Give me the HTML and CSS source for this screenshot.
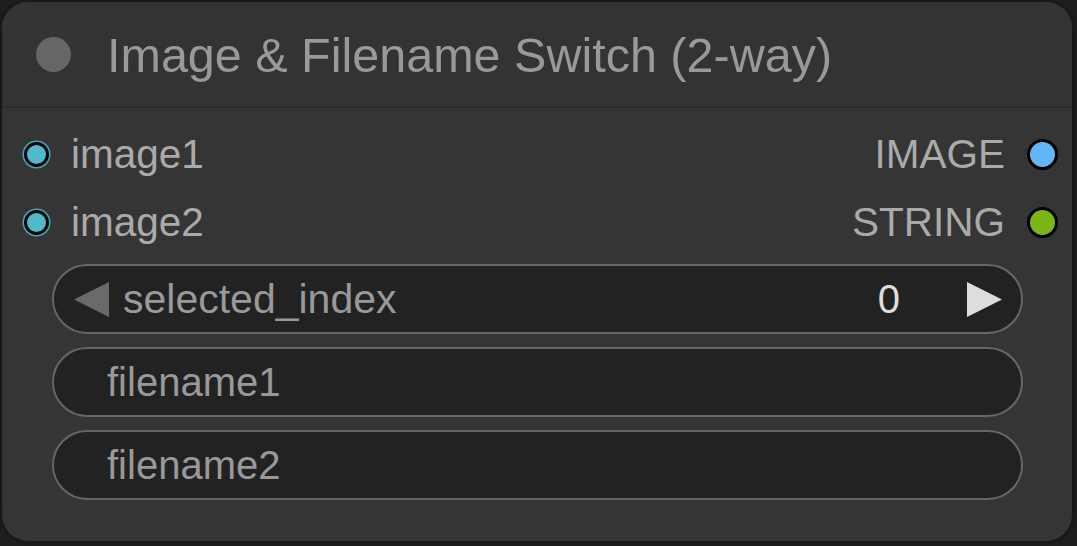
FILE: index.html
```html
<!DOCTYPE html>
<html>
<head>
<meta charset="utf-8">
<link rel="stylesheet" href="styles.css">
</head>
<body>
<div class="node">
  <div class="title">
    <span class="title-dot"></span>
    <span class="title-text">Image &amp; Filename Switch (2-way)</span>
  </div>
  <div class="body">
    <div class="slot-row">
      <div class="input"><span class="in-dot"></span><span class="slot-label">image1</span></div>
      <div class="output"><span class="slot-label">IMAGE</span><span class="out-dot blue"></span></div>
    </div>
    <div class="slot-row">
      <div class="input"><span class="in-dot"></span><span class="slot-label">image2</span></div>
      <div class="output"><span class="slot-label">STRING</span><span class="out-dot green"></span></div>
    </div>
    <div class="widgets">
      <div class="widget number">
        <svg class="arrow left" width="35" height="35" viewBox="0 0 35 35"><polygon points="35,0 35,35 0,17.5" fill="#6a6a6a"/></svg>
        <span class="w-label wide">selected_index</span>
        <span class="w-value">0</span>
        <svg class="arrow right" width="35" height="35" viewBox="0 0 35 35"><polygon points="0,0 0,35 35,17.5" fill="#dddddd"/></svg>
      </div>
      <div class="widget text"><span class="w-label">filename1</span></div>
      <div class="widget text"><span class="w-label">filename2</span></div>
    </div>
  </div>
</div>
</body>
</html>
```

FILE: styles.css
```css
html, body {
  margin: 0;
  padding: 0;
  background: #1f1f1f;
  width: 1077px;
  height: 546px;
  overflow: hidden;
  font-family: "Liberation Sans", Arial, sans-serif;
}

.node {
  margin: 2px 0 0 2px;
  width: 1070px;
  height: 539px;
  background: #353535;
  border-radius: 26px;
  box-shadow: 0 0 6px rgba(0, 0, 0, 0.6);
  overflow: hidden;
  display: flex;
  flex-direction: column;
}

.title {
  height: 104px;
  flex: none;
  background: #333333;
  border-bottom: 2px solid #2a2a2a;
  display: flex;
  align-items: center;
  padding-left: 34px;
  box-sizing: content-box;
}

.title-dot {
  width: 35px;
  height: 35px;
  border-radius: 50%;
  background: #666666;
  flex: none;
}

.title-text {
  margin-left: 36px;
  font-size: 48.5px;
  color: #999999;
  line-height: 1;
  position: relative;
  top: 1px;
}

.body {
  padding-top: 12px;
  display: flex;
  flex-direction: column;
}

.slot-row {
  height: 68px;
  display: flex;
  align-items: center;
  justify-content: space-between;
  padding: 0 14px 0 22px;
}

.input, .output {
  display: flex;
  align-items: center;
}

.slot-label {
  font-size: 40.5px;
  color: #aaaaaa;
  line-height: 1;
}

.in-dot {
  width: 19px;
  height: 19px;
  border-radius: 50%;
  background: #52b8cc;
  border: 3px solid #000;
  box-shadow: 0 0 0 1.5px #3fa9b8;
  margin-right: 22px;
}

.out-dot {
  width: 25px;
  height: 25px;
  border-radius: 50%;
  border: 3px solid #000;
  margin-left: 22px;
}

.out-dot.blue { background: #64b5f6; }
.out-dot.green { background: #7cb518; }

.widgets {
  padding: 8px 0 0 50px;
  display: flex;
  flex-direction: column;
  gap: 13px;
}

.widget {
  width: 971px;
  height: 70px;
  box-sizing: border-box;
  background: #222222;
  border: 2px solid #666666;
  border-radius: 35px;
  display: flex;
  align-items: center;
}

.w-label {
  font-size: 40px;
  color: #999999;
  line-height: 1;
}

.w-label.wide {
  font-size: 41px;
}

.w-value {
  font-size: 40px;
  color: #dddddd;
  line-height: 1;
  margin-left: auto;
}

.number {
  padding: 0 19px 0 20px;
}

.number .arrow.left { margin-right: 14px; }
.number .arrow.right { margin-left: 67px; }

.text {
  padding-left: 53px;
}
```
